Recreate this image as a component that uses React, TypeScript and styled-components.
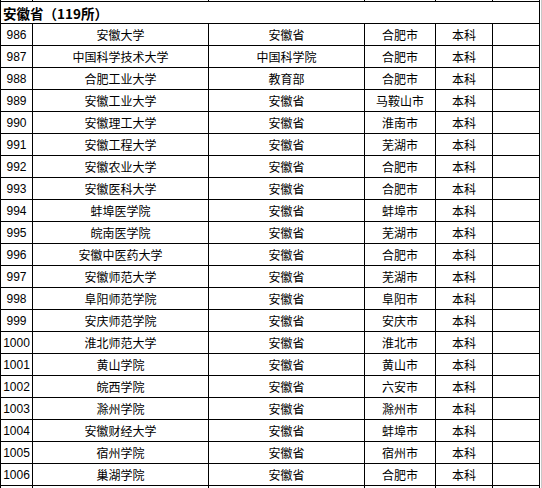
import React from "react";
import styled, {createGlobalStyle} from "styled-components";

interface School {
  no: number;
  name: string;
  dept: string;
  city: string;
  level: string;
}

const schools: School[] = [
  {no: 986, name: "安徽大学", dept: "安徽省", city: "合肥市", level: "本科"},
  {no: 987, name: "中国科学技术大学", dept: "中国科学院", city: "合肥市", level: "本科"},
  {no: 988, name: "合肥工业大学", dept: "教育部", city: "合肥市", level: "本科"},
  {no: 989, name: "安徽工业大学", dept: "安徽省", city: "马鞍山市", level: "本科"},
  {no: 990, name: "安徽理工大学", dept: "安徽省", city: "淮南市", level: "本科"},
  {no: 991, name: "安徽工程大学", dept: "安徽省", city: "芜湖市", level: "本科"},
  {no: 992, name: "安徽农业大学", dept: "安徽省", city: "合肥市", level: "本科"},
  {no: 993, name: "安徽医科大学", dept: "安徽省", city: "合肥市", level: "本科"},
  {no: 994, name: "蚌埠医学院", dept: "安徽省", city: "蚌埠市", level: "本科"},
  {no: 995, name: "皖南医学院", dept: "安徽省", city: "芜湖市", level: "本科"},
  {no: 996, name: "安徽中医药大学", dept: "安徽省", city: "合肥市", level: "本科"},
  {no: 997, name: "安徽师范大学", dept: "安徽省", city: "芜湖市", level: "本科"},
  {no: 998, name: "阜阳师范学院", dept: "安徽省", city: "阜阳市", level: "本科"},
  {no: 999, name: "安庆师范学院", dept: "安徽省", city: "安庆市", level: "本科"},
  {no: 1000, name: "淮北师范大学", dept: "安徽省", city: "淮北市", level: "本科"},
  {no: 1001, name: "黄山学院", dept: "安徽省", city: "黄山市", level: "本科"},
  {no: 1002, name: "皖西学院", dept: "安徽省", city: "六安市", level: "本科"},
  {no: 1003, name: "滁州学院", dept: "安徽省", city: "滁州市", level: "本科"},
  {no: 1004, name: "安徽财经大学", dept: "安徽省", city: "蚌埠市", level: "本科"},
  {no: 1005, name: "宿州学院", dept: "安徽省", city: "宿州市", level: "本科"},
  {no: 1006, name: "巢湖学院", dept: "安徽省", city: "合肥市", level: "本科"},
  {no: 1007, name: "淮南师范学院", dept: "安徽省", city: "淮南市", level: "本科"},
];

const GlobalStyle = createGlobalStyle`
  body {
    margin: 0;
    background: #fff;
    overflow: hidden;
  }
`;

const Page = styled.div`
  width: 542px;
  height: 488px;
  overflow: hidden;
  border-right: 1px solid #c8c8c8;
  box-sizing: border-box;
`;

const Table = styled.table`
  border-collapse: collapse;
  table-layout: fixed;
  width: 539px;
  margin-top: -21px;
  font-family: "Noto Sans CJK SC", "Liberation Sans", sans-serif;
  font-size: 12px;
  color: #000;
`;

const Row = styled.tr`
  height: 22px;
`;

const Cell = styled.td<{$num?: boolean}>`
  border: 1px solid #000;
  padding: 0;
  text-align: center;
  white-space: nowrap;
  overflow: hidden;
  line-height: 20px;
  font-family: ${(p) =>
    p.$num ? `"Liberation Sans", Arial, sans-serif` : `"Noto Sans CJK SC", sans-serif`};
  font-size: 12px;
`;

const TitleCell = styled.td`
  border: 1px solid #000;
  padding: 0 0 0 2px;
  text-align: left;
  font-weight: bold;
  font-size: 13.5px;
  line-height: 20px;
  font-family: "Noto Sans CJK SC", sans-serif;
`;

const App: React.FC = () => {
  return (
    <Page>
      <GlobalStyle />
      <Table>
        <colgroup>
          <col style={{width: 32}} />
          <col style={{width: 176}} />
          <col style={{width: 156}} />
          <col style={{width: 71}} />
          <col style={{width: 57}} />
          <col style={{width: 47}} />
        </colgroup>
        <tbody>
          <Row>
            <Cell $num />
            <Cell>湖州学院</Cell>
            <Cell />
            <Cell />
            <Cell />
            <Cell />
          </Row>
          <Row>
            <TitleCell colSpan={6}>安徽省（119所）</TitleCell>
          </Row>
          {schools.map((s) => (
            <Row key={s.no}>
              <Cell $num>{s.no}</Cell>
              <Cell>{s.name}</Cell>
              <Cell>{s.dept}</Cell>
              <Cell>{s.city}</Cell>
              <Cell>{s.level}</Cell>
              <Cell />
            </Row>
          ))}
        </tbody>
      </Table>
    </Page>
  );
};

export default App;
